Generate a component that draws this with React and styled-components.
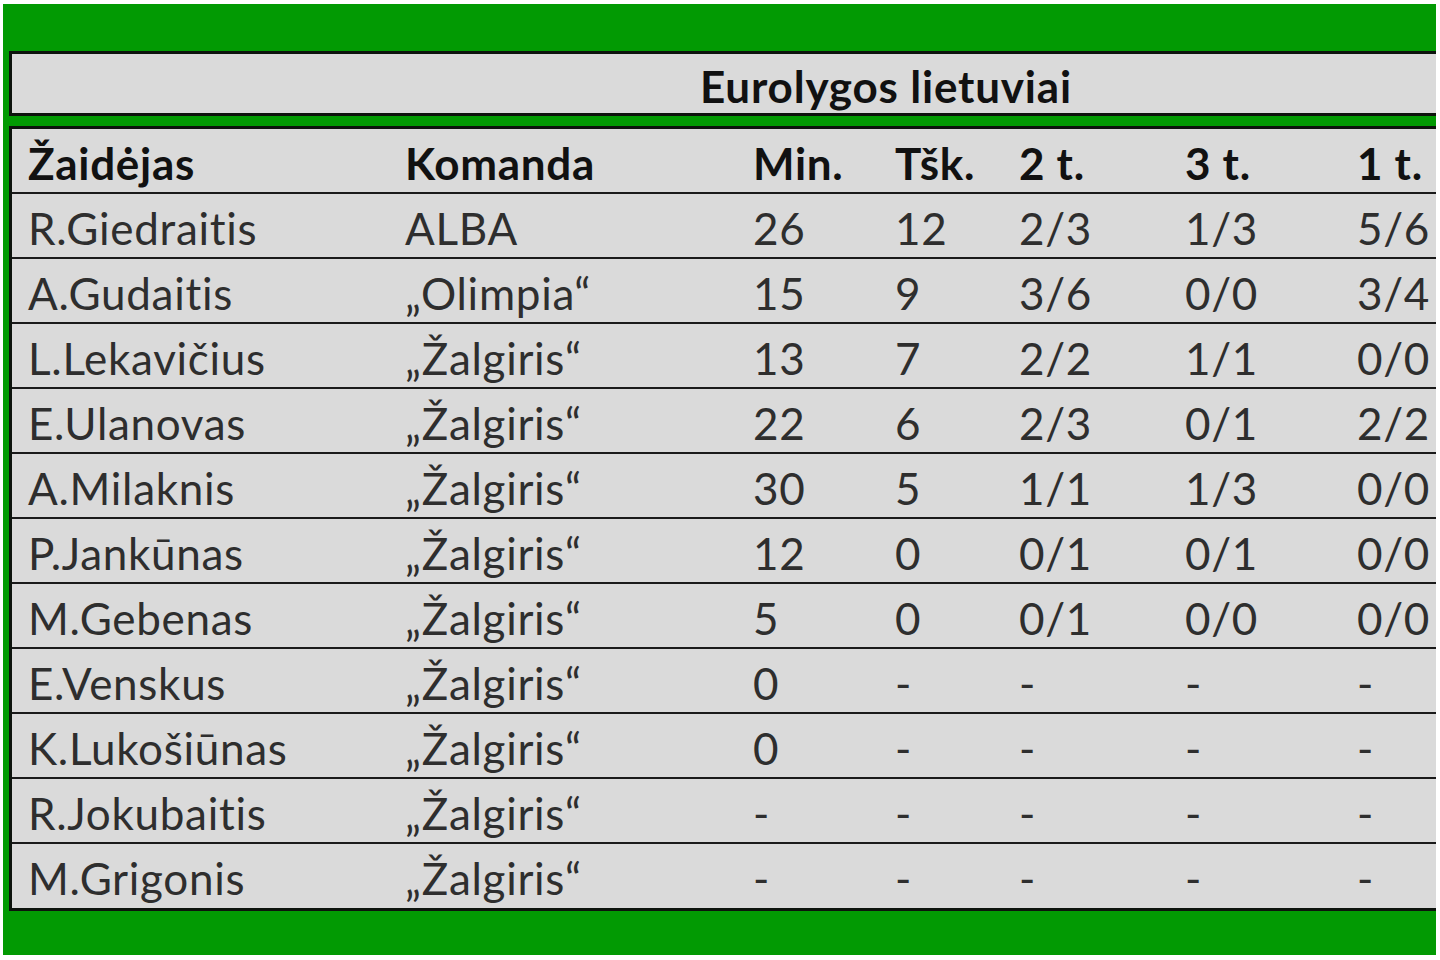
import React from "react";
import styled, { createGlobalStyle } from "styled-components";

const GlobalStyle = createGlobalStyle`
  html, body {
    margin: 0;
    padding: 0;
    background: #ffffff;
  }
  body {
    font-family: Lato, "Open Sans", "Liberation Sans", sans-serif;
  }
`;

const Frame = styled.div`
  box-sizing: border-box;
  margin: 4px 4px 0 3px;
  height: 951px;
  background-color: #029a03; /* green sheet background */
  padding: 47px 0 0 6px;
  overflow: hidden;
`;

const TitleBar = styled.div`
  box-sizing: border-box;
  height: 65px;
  background-color: #dadada;
  border: 3px solid #0d130d;
  border-right: none;
  display: flex;
  align-items: center;
  padding-left: 688px;
  padding-top: 4px;
  font-size: 44px;
  font-weight: 700;
  letter-spacing: 0.8px;
  color: #111;
`;

const Table = styled.div`
  margin-top: 10px;
  background-color: #dadada;
  border-top: 3px solid #0d130d;
  border-left: 3px solid #0d130d;
  border-bottom: 3px solid #0d130d;
`;

const Row = styled.div`
  display: grid;
  grid-template-columns: 377px 348px 142px 124px 166px 172px 1fr;
  align-items: center;
  padding-left: 16px;
  padding-top: 4px;
  box-sizing: border-box;
  border-bottom: ${(p) => (p.$last ? "none" : "2px solid #1a1a1a")};
  height: ${(p) => (p.$last ? "64px" : "65px")};
  font-size: 44px;
  letter-spacing: 0.7px;
  font-weight: ${(p) => (p.$head ? 700 : 400)};
  color: ${(p) => (p.$head ? "#111" : "#2e2e2e")};
`;

const Cell = styled.div`
  white-space: nowrap;
`;

const headers = ["Žaidėjas", "Komanda", "Min.", "Tšk.", "2 t.", "3 t.", "1 t."];

const players = [
  ["R.Giedraitis", "ALBA", "26", "12", "2/3", "1/3", "5/6"],
  ["A.Gudaitis", "„Olimpia“", "15", "9", "3/6", "0/0", "3/4"],
  ["L.Lekavičius", "„Žalgiris“", "13", "7", "2/2", "1/1", "0/0"],
  ["E.Ulanovas", "„Žalgiris“", "22", "6", "2/3", "0/1", "2/2"],
  ["A.Milaknis", "„Žalgiris“", "30", "5", "1/1", "1/3", "0/0"],
  ["P.Jankūnas", "„Žalgiris“", "12", "0", "0/1", "0/1", "0/0"],
  ["M.Gebenas", "„Žalgiris“", "5", "0", "0/1", "0/0", "0/0"],
  ["E.Venskus", "„Žalgiris“", "0", "-", "-", "-", "-"],
  ["K.Lukošiūnas", "„Žalgiris“", "0", "-", "-", "-", "-"],
  ["R.Jokubaitis", "„Žalgiris“", "-", "-", "-", "-", "-"],
  ["M.Grigonis", "„Žalgiris“", "-", "-", "-", "-", "-"],
];

export default function App() {
  return (
    <>
      <GlobalStyle />
      <Frame>
        <TitleBar>Eurolygos lietuviai</TitleBar>
        <Table>
          <Row $head>
            {headers.map((h) => (
              <Cell key={h}>{h}</Cell>
            ))}
          </Row>
          {players.map((p, i) => (
            <Row key={p[0]} $last={i === players.length - 1}>
              {p.map((v, j) => (
                <Cell key={j}>{v}</Cell>
              ))}
            </Row>
          ))}
        </Table>
      </Frame>
    </>
  );
}
